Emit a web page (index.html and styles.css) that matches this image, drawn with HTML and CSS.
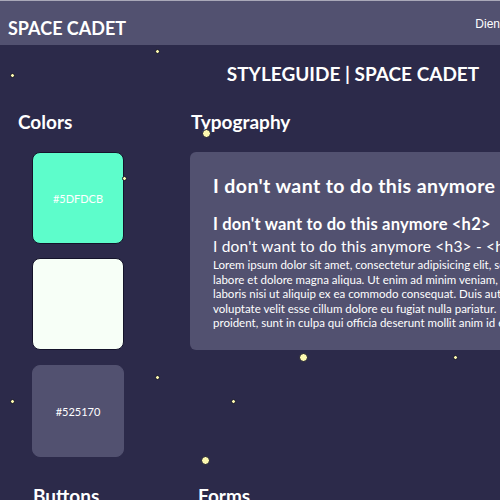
FILE: index.html
```html
<!DOCTYPE html>
<html lang="en">
<head>
    <meta charset="UTF-8">
    <title>Styleguide | Space Cadet</title>
    <link rel="stylesheet" href="styles.css">
</head>
<body>
    <div class="page">
        <header class="topbar">
            <span class="brand">SPACE CADET</span>
            <nav class="nav">
                <a href="#">Dienste</a>
            </nav>
        </header>

        <h1 class="page-title">STYLEGUIDE | SPACE CADET</h1>

        <div class="row">
            <!-- Colors -->
            <aside class="colors">
                <h2>Colors</h2>
                <div class="swatch mint">#5DFDCB</div>
                <div class="swatch snow">#F7FFF7</div>
                <div class="swatch dusk">#525170</div>
            </aside>

            <!-- Typography -->
            <section class="typography">
                <h2>Typography</h2>
                <div class="type-card">
                    <div class="t-h1">I don't want to do this anymore &lt;h1&gt;</div>
                    <div class="t-h2">I don't want to do this anymore &lt;h2&gt;</div>
                    <div class="t-h3">I don't want to do this anymore &lt;h3&gt; - &lt;h6&gt;</div>
                    <p>Lorem ipsum dolor sit amet, consectetur adipisicing elit, sed do eiusmod tempor incididunt ut<br>
                    labore et dolore magna aliqua. Ut enim ad minim veniam, quis nostrud exercitation ullamco<br>
                    laboris nisi ut aliquip ex ea commodo consequat. Duis aute irure dolor in reprehenderit in<br>
                    voluptate velit esse cillum dolore eu fugiat nulla pariatur. Excepteur sint occaecat cupidatat non<br>
                    proident, sunt in culpa qui officia deserunt mollit anim id est laborum.</p>
                </div>
            </section>
        </div>

        <div class="row row-lower">
            <h2 class="buttons-title">Buttons</h2>
            <h2 class="forms-title">Forms</h2>
        </div>

        <!-- stars -->
        <span class="star" style="left:155px;top:49px"></span>
        <span class="star" style="left:10px;top:73px"></span>
        <span class="star big" style="left:202px;top:129px"></span>
        <span class="star" style="left:122px;top:176px"></span>
        <span class="star big" style="left:299px;top:353px"></span>
        <span class="star" style="left:453px;top:355px"></span>
        <span class="star" style="left:155px;top:375px"></span>
        <span class="star" style="left:10px;top:399px"></span>
        <span class="star" style="left:231px;top:399px"></span>
        <span class="star big" style="left:201px;top:456px"></span>
    </div>
</body>
</html>
```

FILE: styles.css
```css
html, body {
    margin: 0;
    padding: 0;
    overflow: hidden;
}
body {
    background: #2c2a4a;
    color: #fff;
    font-family: Lato, "Open Sans", sans-serif;
}
.page {
    position: relative;
    width: 706px;
    min-height: 500px;
}
.topbar {
    display: flex;
    align-items: center;
    justify-content: space-between;
    height: 44px;
    padding: 0 8px;
    background: #525170;
    border-top: 1px solid #a9a8b8;
}
.brand {
    font-size: 18px;
    font-weight: 700;
    padding-top: 9px;
}
.nav a {
    display: inline-block;
    margin-right: 182px;
    margin-bottom: 4px;
    color: #fff;
    text-decoration: none;
    font-family: "Liberation Sans", Arial, sans-serif;
    font-size: 12px;
}
.page-title {
    margin: 0;
    padding-top: 17px;
    text-align: center;
    font-size: 19px;
    font-weight: 700;
}
.row {
    display: grid;
    grid-template-columns: 172px 1fr;
    margin-top: 25px;
}
h2 {
    margin: 0;
    font-size: 19px;
    font-weight: 700;
}
.colors h2 {
    padding-left: 18px;
}
.swatch {
    width: 90px;
    height: 90px;
    margin: 14px 0 0 32px;
    border-radius: 8px;
    border: 1px solid #14132a;
    display: flex;
    align-items: center;
    justify-content: center;
    font-size: 11px;
    color: #fff;
}
.swatch.mint {
    margin-top: 19px;
    background: #5dfdcb;
}
.swatch.snow {
    background: #f7fff7;
    color: #f7fff7;
}
.swatch.dusk {
    margin-top: 15px;
    background: #525170;
    border-color: #525170;
}
.typography h2 {
    padding-left: 19px;
}
.type-card {
    margin: 19px 0 0 18px;
    background: #525170;
    border-radius: 6px;
    padding: 22px 0 26px 23px;
    height: 150px;
    white-space: nowrap;
    overflow: hidden;
}
.t-h1 {
    font-size: 19.5px;
    font-weight: 700;
    letter-spacing: 0.4px;
}
.t-h2 {
    margin-top: 17px;
    font-size: 16.5px;
    font-weight: 700;
    letter-spacing: 0.2px;
}
.t-h3 {
    margin-top: 3px;
    font-size: 15.5px;
    letter-spacing: 0.2px;
}
.type-card p {
    margin: 3px 0 0;
    font-size: 11.5px;
    line-height: 14.6px;
}
.row-lower {
    margin-top: 27px;
    grid-template-columns: 198px 1fr;
}
.buttons-title {
    padding-left: 33px;
}
.star {
    position: absolute;
    width: 3px;
    height: 3px;
    border-radius: 50%;
    background: #fdf9b0;
    border: 1px solid #14132a;
}
.star.big {
    width: 7px;
    height: 7px;
}
```
